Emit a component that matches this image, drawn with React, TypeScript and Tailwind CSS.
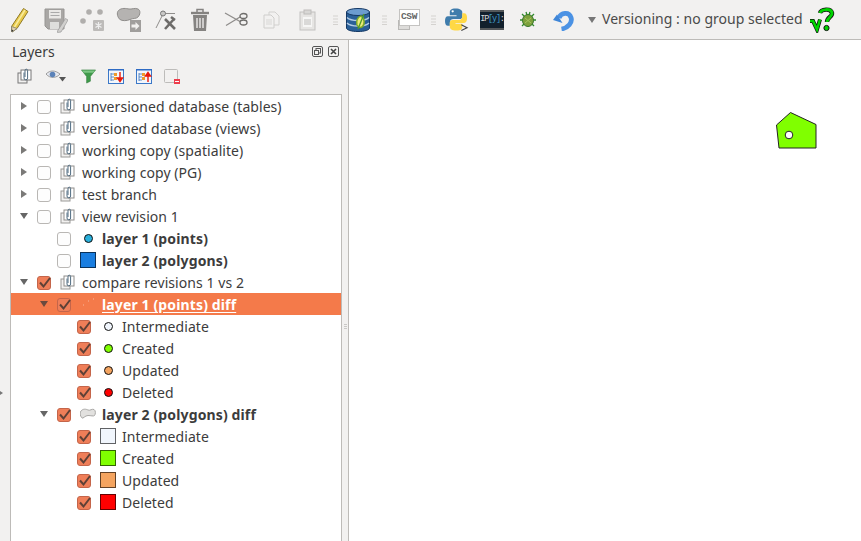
import type { ReactNode } from "react";

const font = "font-['Noto_Sans','Open_Sans',sans-serif]";

function Slot({ w, children }: { w: string; children: ReactNode }) {
  return <div className={`${w} flex h-full shrink-0 items-center justify-center`}>{children}</div>;
}

function Handle() {
  return (
    <svg width="5" height="10" viewBox="0 0 5 10">
      <path d="M0 1h5M0 4h5M0 7h5M0 9.500h5" stroke="#d4d2cf" />
    </svg>
  );
}

function Pencil() {
  return (
    <svg width="20" height="26" viewBox="0 0 20 26">
      <path d="M13.500 1.500l4.500 3L7 21.500l-5 3.500-.5-5.500z" fill="#e8c94a" stroke="#8f7a28" strokeLinejoin="round" />
      <path d="M15 3L4.500 20" stroke="#f8eb9c" strokeWidth="1.500" />
      <path d="M1.500 19.500L7 21.500l-5 3.500z" fill="#e3d4b0" stroke="#777" strokeWidth=".7" />
      <path d="M1.500 22.500l2 1-1.800 1.500z" fill="#333" />
    </svg>
  );
}

function Save() {
  return (
    <svg width="24" height="26" viewBox="0 0 24 26">
      <path d="M1 2h19v20H4l-3-3z" fill="#a9a7a5" stroke="#979593" />
      <rect x="5" y="3" width="12" height="8.500" fill="#e9e8e6" />
      <path d="M6.500 5.500h9M6.500 8.500h9" stroke="#aaa" />
      <rect x="6" y="15" width="9" height="7" fill="#dededc" />
      <path d="M13.500 24l8-12.500 2.500 1.500-7 12-3.500.5z" fill="#d1d0ce" stroke="#999" strokeWidth=".7" />
    </svg>
  );
}

function Nodes() {
  return (
    <svg width="26" height="24" viewBox="0 0 26 24">
      <circle cx="10" cy="4" r="2.800" fill="#b0aeac" />
      <circle cx="21" cy="4" r="2.800" fill="#b0aeac" />
      <circle cx="4" cy="13" r="2.800" fill="#b0aeac" />
      <rect x="14" y="12" width="11" height="11" rx="1" fill="#bdbbb9" />
      <path d="M19.500 14v7M16.500 15.500l6 4M22.500 15.500l-6 4" stroke="#eee" strokeWidth="1.200" />
    </svg>
  );
}

function MoveFeature() {
  return (
    <svg width="26" height="26" viewBox="0 0 26 26">
      <path d="M3.500 3.500c3-3 8-2 10.500-1.500s6-1.500 9 0 2 6 0 8-5 1-8 2.500-8 1.500-10 0-4-6.500-1.500-9z" fill="#b5b3b1" stroke="#8f8d8b" />
      <rect x="15" y="13" width="11" height="12" fill="#a09e9c" />
      <path d="M16.500 17.500h4V15l4 4-4 4v-2.500h-4z" fill="#f1f0ee" />
    </svg>
  );
}

function NodeTool() {
  return (
    <svg width="26" height="24" viewBox="0 0 26 24">
      <path d="M5 20l7-14" stroke="#8f8d8b" />
      <path d="M14 5.500h10" stroke="#8f8d8b" />
      <circle cx="12" cy="5.500" r="2.500" fill="#c9c8c6" stroke="#777" />
      <path d="M14 11l10 10M14 21l9-10" stroke="#6e6c6a" strokeWidth="2.600" />
      <path d="M20 9l4 3" stroke="#6e6c6a" strokeWidth="2.600" />
    </svg>
  );
}

function Trash() {
  return (
    <svg width="20" height="24" viewBox="0 0 20 24">
      <path d="M1 5h18" stroke="#858381" strokeWidth="2.400" />
      <path d="M7 4V1.500h6V4" fill="none" stroke="#858381" strokeWidth="1.500" />
      <path d="M3 7h14l-1 16H4z" fill="#858381" />
      <path d="M7 10v10M10 10v10M13 10v10" stroke="#e6e5e3" strokeWidth="1.500" />
    </svg>
  );
}

function Scissors() {
  return (
    <svg width="24" height="18" viewBox="0 0 24 18">
      <path d="M1 2l15 8.500M2 14.500L16 6" stroke="#8f8d8b" strokeWidth="1.300" />
      <ellipse cx="19.500" cy="5" rx="3.500" ry="2.500" fill="none" stroke="#6e6c6a" strokeWidth="1.300" />
      <ellipse cx="19.500" cy="11.500" rx="3.500" ry="2.500" fill="none" stroke="#6e6c6a" strokeWidth="1.300" />
    </svg>
  );
}

function Copy() {
  return (
    <svg width="18" height="18" viewBox="0 0 18 18">
      <path d="M6 1h6l4 4v9H6z" fill="#f2f1f0" stroke="#d2d1cf" />
      <path d="M1 4h7l3 3v10H1z" fill="#f2f1f0" stroke="#cfcecc" />
      <path d="M3 9h6M3 11h6M3 13h6" stroke="#d8d7d5" />
    </svg>
  );
}

function Paste() {
  return (
    <svg width="18" height="22" viewBox="0 0 18 22">
      <rect x="1" y="3" width="15" height="18" fill="#e6e5e3" stroke="#c2c1bf" />
      <rect x="5" y="1" width="7" height="4" fill="#d8d7d5" stroke="#bdbcba" />
      <path d="M4 8h9v10H4z" fill="#f6f6f5" />
      <path d="M5 11h7M5 13h7M5 15h7" stroke="#bdbcba" />
    </svg>
  );
}

function Database() {
  return (
    <svg width="24" height="24" viewBox="0 0 24 24">
      <path d="M.500 4v16c0 2 5 3.500 11.500 3.500S23.500 22 23.500 20V4z" fill="#2a6098" stroke="#143763" />
      <ellipse cx="12" cy="4" rx="11.500" ry="3.500" fill="#6c9ccf" stroke="#143763" />
      <path d="M1 9.500c2 2 6 3 11 3s9-1 11-3M1 15c2 2 6 3 11 3s9-1 11-3" fill="none" stroke="#b3cce6" strokeWidth="1.300" />
      <path d="M15 8c-4 1-5 6-4 9 1 2 3 3 5 2 3-2 3-9-1-11z" fill="#ecec7a" stroke="#7aa82c" strokeWidth="1.500" />
      <path d="M12 21L18 6" stroke="#4d9a2d" strokeWidth="1.300" />
    </svg>
  );
}

function Csw() {
  return (
    <div className="relative h-[22px] w-[22px]">
      <div className="absolute bottom-[1px] left-0 h-[10px] w-[12px] border border-[#b9b8b6] bg-[#dddcda]" />
      <div className="absolute right-0 top-0 flex h-[17px] w-[21px] items-center justify-center border border-[#c4c3c1] bg-white font-['Liberation_Mono',monospace] text-[9.500px] font-bold tracking-[-0.3px] text-[#666]">
        CSW
      </div>
    </div>
  );
}

function Python() {
  return (
    <svg width="25" height="26" viewBox="0 0 25 26">
      <path d="M11 1c-5 0-6 2-6 4v3h7v1H3c-2 0-3 2-3 5s1 5 3 5h2v-3c0-3 2-4 4-4h6c2 0 3-1 3-3V5c0-2-2-4-7-4z" fill="#3f7cac" />
      <circle cx="8" cy="4" r="1.200" fill="#fff" />
      <path d="M12 24c5 0 6-2 6-4v-3h-7v-1h9c2 0 3-2 3-5s-1-5-3-5h-2v3c0 3-2 4-4 4H8c-2 0-3 1-3 3v4c0 2 2 4 7 4z" fill="#ffd845" />
      <path d="M17 18l6 3-6 3" fill="none" stroke="#444" strokeWidth="1.200" />
    </svg>
  );
}

function Ipy() {
  return (
    <div className="flex h-[20px] w-[24px] items-center justify-center overflow-hidden border-y-2 border-[#55585a] bg-[#12202c] font-['Liberation_Mono',monospace] text-[8.500px] leading-none tracking-[-1.200px] text-[#d8d8d8]">
      IP<span className="text-[#3e9bc8]">[y]</span>:
    </div>
  );
}

function Bug() {
  return (
    <svg width="18" height="18" viewBox="0 0 18 18">
      <path d="M3 3l3 3M15 3l-3 3M1 9h3M14 9h3M3 15l3-3M15 15l-3-3M7 1l1 3M11 1l-1 3" stroke="#2f8a2b" strokeWidth="1.300" />
      <ellipse cx="9" cy="9.500" rx="5.500" ry="6" fill="#7da13c" stroke="#37762a" />
      <path d="M6 7l6 5M6 12l6-5" stroke="#a8c35e" />
    </svg>
  );
}

function Undo() {
  return (
    <svg width="22" height="22" viewBox="0 0 22 22">
      <path d="M6 9C8 3.500 16 2.500 18 8.500c1.700 5-3 10.500-9.500 11.500" fill="none" stroke="#4b92e4" strokeWidth="4.800" />
      <path d="M0 11l4-5.500L9.500 14z" fill="#3f86d8" />
    </svg>
  );
}

function VersionQ() {
  return (
    <svg width="26" height="26" viewBox="0 0 26 26">
      <path d="M1 14h3l4 8.500 3-10" fill="none" stroke="#111" strokeWidth="4" />
      <path d="M1 14h3l4 8.500 3-10" fill="none" stroke="#00d400" strokeWidth="2.600" />
      <path d="M11 6c1-4 11-5 12 0 .6 4-5 4-5 9" fill="none" stroke="#111" strokeWidth="4.400" />
      <path d="M11 6c1-4 11-5 12 0 .6 4-5 4-5 9" fill="none" stroke="#00d400" strokeWidth="3" />
      <circle cx="17.500" cy="21" r="2.600" fill="#00d400" stroke="#111" />
    </svg>
  );
}

function Group() {
  return (
    <svg width="16" height="16" viewBox="0 0 16 16">
      <rect x="1" y="5" width="9" height="10" fill="#f2f1f0" stroke="#9a9997" />
      <rect x="4" y="2" width="10" height="10" fill="#fff" stroke="#8f8e8c" />
      <path d="M7 4.500V10a1.800 1.800 0 0 0 3.600 0V2.500a1.300 1.300 0 0 0-2.600 0V9" fill="none" stroke="#4e6a80" />
    </svg>
  );
}

function SmallGroup() {
  return (
    <svg width="16" height="16" viewBox="0 0 16 16">
      <rect x="1" y="5" width="9" height="10" fill="#f2f1f0" stroke="#777" />
      <rect x="4" y="2" width="10" height="10" fill="#fff" stroke="#777" />
      <path d="M7 4.500V10a1.800 1.800 0 0 0 3.600 0V2.500a1.300 1.300 0 0 0-2.600 0V9" fill="none" stroke="#4e6a80" />
    </svg>
  );
}

function Eye() {
  return (
    <svg width="20" height="12" viewBox="0 0 20 12">
      <path d="M0 4c4-4 9-4 14 0-3 4-10 5-14 0z" fill="#e6e8ee" stroke="#888" strokeWidth=".8" />
      <circle cx="6.500" cy="4.500" r="2.800" fill="#5b82b8" />
      <path d="M13 7h7l-3.500 4.500z" fill="#555" />
    </svg>
  );
}

function Funnel() {
  return (
    <svg width="15" height="15" viewBox="0 0 16 15">
      <path d="M.500 .500h15l-5.500 7v5l-4 2v-7z" fill="#3f9a4a" stroke="#2b7a36" strokeWidth=".6" />
      <path d="M1 1h14l-2 2.500H3z" fill="#7cc583" />
    </svg>
  );
}

function TreeBtn({ up }: { up?: boolean }) {
  return (
    <svg width="16" height="15" viewBox="0 0 16 15">
      <rect x=".500" y=".500" width="15" height="14" fill="#f3f6fb" stroke="#3b78c8" />
      <path d="M0 .500h16" stroke="#2e6bc4" strokeWidth="2" />
      <path d="M3 4v8M3 5h3M3 8h3M3 11h3" stroke="#3a74bd" strokeWidth=".8" />
      <path d="M6 4h3v3H6zM6 8h3v3H6z" fill="#ef9a2b" />
      {up ? (
        <path d="M12 13V6M9.500 7l2.500-3.500L14.500 7z" fill="#e81a0c" stroke="#e81a0c" strokeWidth="1.400" />
      ) : (
        <path d="M12 3v7M9.500 9l2.500 3.500L14.500 9z" fill="#e81a0c" stroke="#e81a0c" strokeWidth="1.400" />
      )}
    </svg>
  );
}

function RemoveBtn() {
  return (
    <svg width="16" height="16" viewBox="0 0 16 16">
      <rect x=".500" y="1.500" width="13" height="13" rx="1" fill="#f2f1f0" stroke="#bdbcba" />
      <rect x="10" y="11" width="6" height="5" fill="#ee3e4c" />
      <path d="M11 13.500h4" stroke="#fff" />
    </svg>
  );
}

function Checkbox({ checked }: { checked?: boolean }) {
  if (!checked) {
    return <div className="mt-[2px] h-[14px] w-[14px] shrink-0 rounded-[3px] border border-[#b9b7b4] bg-[#fdfdfd]" />;
  }
  return (
    <div className="relative mt-[2px] h-[14px] w-[14px] shrink-0 rounded-[3px] border border-[#c4654a] bg-[#ef7e58]">
      <svg className="absolute -top-[1px] left-0" width="14" height="14" viewBox="0 0 14 14">
        <path d="M2 6.500l3.500 4L12 2" fill="none" stroke="#5e4036" strokeWidth="2" />
      </svg>
    </div>
  );
}

function Dot({ color }: { color: string }) {
  return <div className="h-[9px] w-[9px] rounded-full border border-[#111]" style={{ backgroundColor: color }} />;
}

function Swatch({ color }: { color: string }) {
  return <div className="h-[16px] w-[16px] border border-black/60" style={{ backgroundColor: color }} />;
}

type Row = {
  label: string;
  depth: 0 | 1 | 2;
  arrow?: "right" | "down";
  checked?: boolean;
  bold?: boolean;
  selected?: boolean;
  icon: ReactNode;
};

const rows: Row[] = [
  { label: "unversioned database (tables)", depth: 0, arrow: "right", icon: <Group /> },
  { label: "versioned database (views)", depth: 0, arrow: "right", icon: <Group /> },
  { label: "working copy (spatialite)", depth: 0, arrow: "right", icon: <Group /> },
  { label: "working copy (PG)", depth: 0, arrow: "right", icon: <Group /> },
  { label: "test branch", depth: 0, arrow: "right", icon: <Group /> },
  { label: "view revision 1", depth: 0, arrow: "down", icon: <Group /> },
  { label: "layer 1 (points)", depth: 1, bold: true, icon: <Dot color="#29b0dc" /> },
  { label: "layer 2 (polygons)", depth: 1, bold: true, icon: <Swatch color="#1a7ee0" /> },
  { label: "compare revisions 1 vs 2", depth: 0, arrow: "down", checked: true, icon: <Group /> },
  {
    label: "layer 1 (points) diff",
    depth: 1,
    arrow: "down",
    checked: true,
    bold: true,
    selected: true,
    icon: (
      <svg width="16" height="16" viewBox="0 0 16 16">
        <path d="M3 9h1M8 5h1M13 3h1" stroke="#f7b79c" />
      </svg>
    ),
  },
  { label: "Intermediate", depth: 2, checked: true, icon: <Dot color="#f1f6fd" /> },
  { label: "Created", depth: 2, checked: true, icon: <Dot color="#80ff00" /> },
  { label: "Updated", depth: 2, checked: true, icon: <Dot color="#f4a460" /> },
  { label: "Deleted", depth: 2, checked: true, icon: <Dot color="#ff0000" /> },
  {
    label: "layer 2 (polygons) diff",
    depth: 1,
    arrow: "down",
    checked: true,
    bold: true,
    icon: (
      <svg width="16" height="12" viewBox="0 0 16 12">
        <path d="M1 3c2-2.500 5-2 7-1s4-1.500 6-.5 1.500 5 .5 6-3.500 0-6.500 0-5 3.500-6 2.500-3-4.500-1-7z" fill="#e2e1df" stroke="#a8a7a5" />
      </svg>
    ),
  },
  { label: "Intermediate", depth: 2, checked: true, icon: <Swatch color="#f1f6fd" /> },
  { label: "Created", depth: 2, checked: true, icon: <Swatch color="#80ff00" /> },
  { label: "Updated", depth: 2, checked: true, icon: <Swatch color="#f4a460" /> },
  { label: "Deleted", depth: 2, checked: true, icon: <Swatch color="#ff0000" /> },
];

const indent = { 0: "pl-0", 1: "pl-5", 2: "pl-10" };

function TreeRow({ row }: { row: Row }) {
  return (
    <div className={`flex h-[22px] items-center ${indent[row.depth]} ${row.selected ? "bg-[#f47a4a]" : ""}`}>
      <div className="flex w-[26px] shrink-0 items-center justify-center">
        {row.arrow === "right" && (
          <svg width="6" height="8" viewBox="0 0 6 8">
            <path d="M0 0l6 4-6 4z" fill="#7b7a78" />
          </svg>
        )}
        {row.arrow === "down" && (
          <svg width="8" height="6" viewBox="0 0 8 6">
            <path d="M0 0h8L4 6z" fill={row.selected ? "#6b4a3e" : "#666"} />
          </svg>
        )}
      </div>
      <Checkbox checked={row.checked} />
      <div className="ml-[9px] flex w-[16px] shrink-0 items-center justify-center">{row.icon}</div>
      <span
        className={`ml-[6px] whitespace-nowrap pt-[2px] text-[14px] leading-[20px] ${
          row.bold ? "font-bold tracking-[0.13px]" : "tracking-[0.06px]"
        } ${row.selected ? "text-white underline underline-offset-2" : "text-[#3c3c3c]"}`}
      >
        {row.label}
      </span>
    </div>
  );
}

export default function App() {
  return (
    <div className={`flex h-[541px] w-[861px] flex-col overflow-hidden bg-[#f2f1f0] ${font}`}>
      {/* Toolbar */}
      <div className="flex h-[39px] shrink-0 items-center pl-[2px]">
        <Slot w="w-[36px]"><Pencil /></Slot>
        <Slot w="w-[36px]"><Save /></Slot>
        <Slot w="w-[36px]"><Nodes /></Slot>
        <Slot w="w-[36px]"><MoveFeature /></Slot>
        <Slot w="w-[36px]"><NodeTool /></Slot>
        <Slot w="w-[36px]"><Trash /></Slot>
        <Slot w="w-[36px]"><Scissors /></Slot>
        <Slot w="w-[36px]"><Copy /></Slot>
        <Slot w="w-[36px]"><Paste /></Slot>
        <Slot w="w-[18px]"><Handle /></Slot>
        <Slot w="w-[28px]"><Database /></Slot>
        <Slot w="w-[24px]"><Handle /></Slot>
        <Slot w="w-[25px]"><Csw /></Slot>
        <Slot w="w-[24px]"><Handle /></Slot>
        <Slot w="w-[24px]"><Python /></Slot>
        <Slot w="w-[46px]"><Ipy /></Slot>
        <Slot w="w-[26px]"><Bug /></Slot>
        <Slot w="w-[46px]"><Undo /></Slot>
        <Slot w="w-[10px]">
          <svg width="8" height="6" viewBox="0 0 8 6">
            <path d="M0 0h8L4 6z" fill="#777" />
          </svg>
        </Slot>
        <span className="ml-[5px] whitespace-nowrap pb-[2px] text-[14px] tracking-[0.03px] text-[#4a4a4a]">
          Versioning : no group selected
        </span>
        <div className="ml-[6px]"><VersionQ /></div>
      </div>

      <div className="flex min-h-0 flex-1 border-t border-[#bdbbb8]">
        {/* Layers panel */}
        <div className="relative flex w-[348px] shrink-0 flex-col pl-[10px] pr-[6px]">
          <div className="flex h-[24px] items-center pb-[2px] pl-[2px]">
            <span className="text-[14px] text-[#3c3c3c]">Layers</span>
            <div className="ml-auto flex items-center gap-[5px] pr-[3px]">
              <svg width="11" height="11" viewBox="0 0 11 11">
                <rect x=".500" y=".500" width="10" height="10" rx="1.500" fill="none" stroke="#555" />
                <rect x="4" y="2.500" width="4.500" height="4.500" fill="none" stroke="#555" />
                <rect x="2.500" y="4.500" width="4" height="4" fill="#f2f1f0" stroke="#555" />
              </svg>
              <svg width="11" height="11" viewBox="0 0 11 11">
                <rect x=".500" y=".500" width="10" height="10" rx="1.500" fill="none" stroke="#555" />
                <path d="M3 3l5 5M8 3l-5 5" stroke="#444" strokeWidth="1.600" />
              </svg>
            </div>
          </div>
          <div className="flex h-[30px] items-center pb-[6px]">
            <div className="flex w-[30px] justify-center"><SmallGroup /></div>
            <div className="flex w-[32px] justify-center"><Eye /></div>
            <div className="ml-[2px] flex w-[28px] justify-center"><Funnel /></div>
            <div className="flex w-[28px] justify-center"><TreeBtn /></div>
            <div className="flex w-[28px] justify-center"><TreeBtn up /></div>
            <div className="flex w-[28px] justify-center"><RemoveBtn /></div>
          </div>
          <div className="min-h-0 flex-1 border border-b-0 border-[#bdbbb8] bg-white">
            {rows.map((row, i) => (
              <TreeRow key={i} row={row} />
            ))}
          </div>
          {/* splitter grip */}
          <div className="absolute right-[1px] top-[284px] flex flex-col gap-[1px]">
            <div className="h-[1px] w-[3px] bg-[#c9c8c6]" />
            <div className="h-[1px] w-[3px] bg-[#c9c8c6]" />
            <div className="h-[1px] w-[3px] bg-[#c9c8c6]" />
          </div>
          <div className="absolute left-0 top-[351px] h-0 w-0 border-y-[2px] border-l-[3px] border-y-transparent border-l-[#777]" />
        </div>

        {/* Map canvas */}
        <div className="relative flex-1 border-l border-[#bdbbb8] bg-white">
          <svg className="absolute left-[426px] top-[71px]" width="42" height="38" viewBox="0 0 42 38">
            <path d="M1.500 14L15.500 1.500l25.500 12v23.500H4z" fill="#80ff00" stroke="#222" strokeLinejoin="round" />
            <circle cx="14" cy="24" r="3.800" fill="#fff" stroke="#222" />
          </svg>
        </div>
      </div>
    </div>
  );
}
